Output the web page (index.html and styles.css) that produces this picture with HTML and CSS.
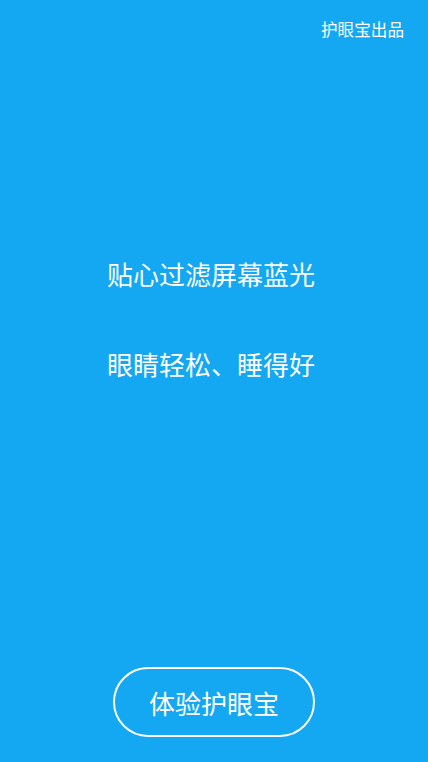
FILE: index.html
```html
<!DOCTYPE html>
<html lang="zh">
<head>
<meta charset="utf-8">
<title>护眼宝</title>
<link rel="stylesheet" href="styles.css">
</head>
<body>
<div class="screen">
  <header class="top">护眼宝出品</header>
  <main class="slogan">
    <p class="line">贴心过滤屏幕蓝光</p>
    <p class="line">眼睛轻松、睡得好</p>
  </main>
  <div class="action">
    <button class="try">体验护眼宝</button>
  </div>
</div>
</body>
</html>
```
FILE: styles.css
```css
html, body {
  margin: 0;
  padding: 0;
}
body {
  background: #14a8f2;
  font-family: "Noto Sans CJK SC", "Noto Sans", sans-serif;
  color: #ffffff;
}
.screen {
  height: 762px;
  display: flex;
  flex-direction: column;
  box-sizing: border-box;
}
.top {
  padding: 19px 24px 0 0;
  text-align: right;
  font-size: 16.6px;
  line-height: 20px;
}
.slogan {
  margin-top: 217px;
  display: flex;
  flex-direction: column;
  align-items: center;
  gap: 54px;
  padding-right: 6px;
}
.line {
  margin: 0;
  font-size: 26px;
  line-height: 36px;
}
.action {
  margin-top: auto;
  margin-bottom: 25px;
  display: flex;
  justify-content: center;
}
.try {
  width: 202px;
  height: 70px;
  border: 2.5px solid #ffffff;
  border-radius: 35px;
  background: transparent;
  color: #ffffff;
  font-family: "Noto Sans CJK SC", "Noto Sans", sans-serif;
  font-size: 26px;
  padding: 0;
}
```
